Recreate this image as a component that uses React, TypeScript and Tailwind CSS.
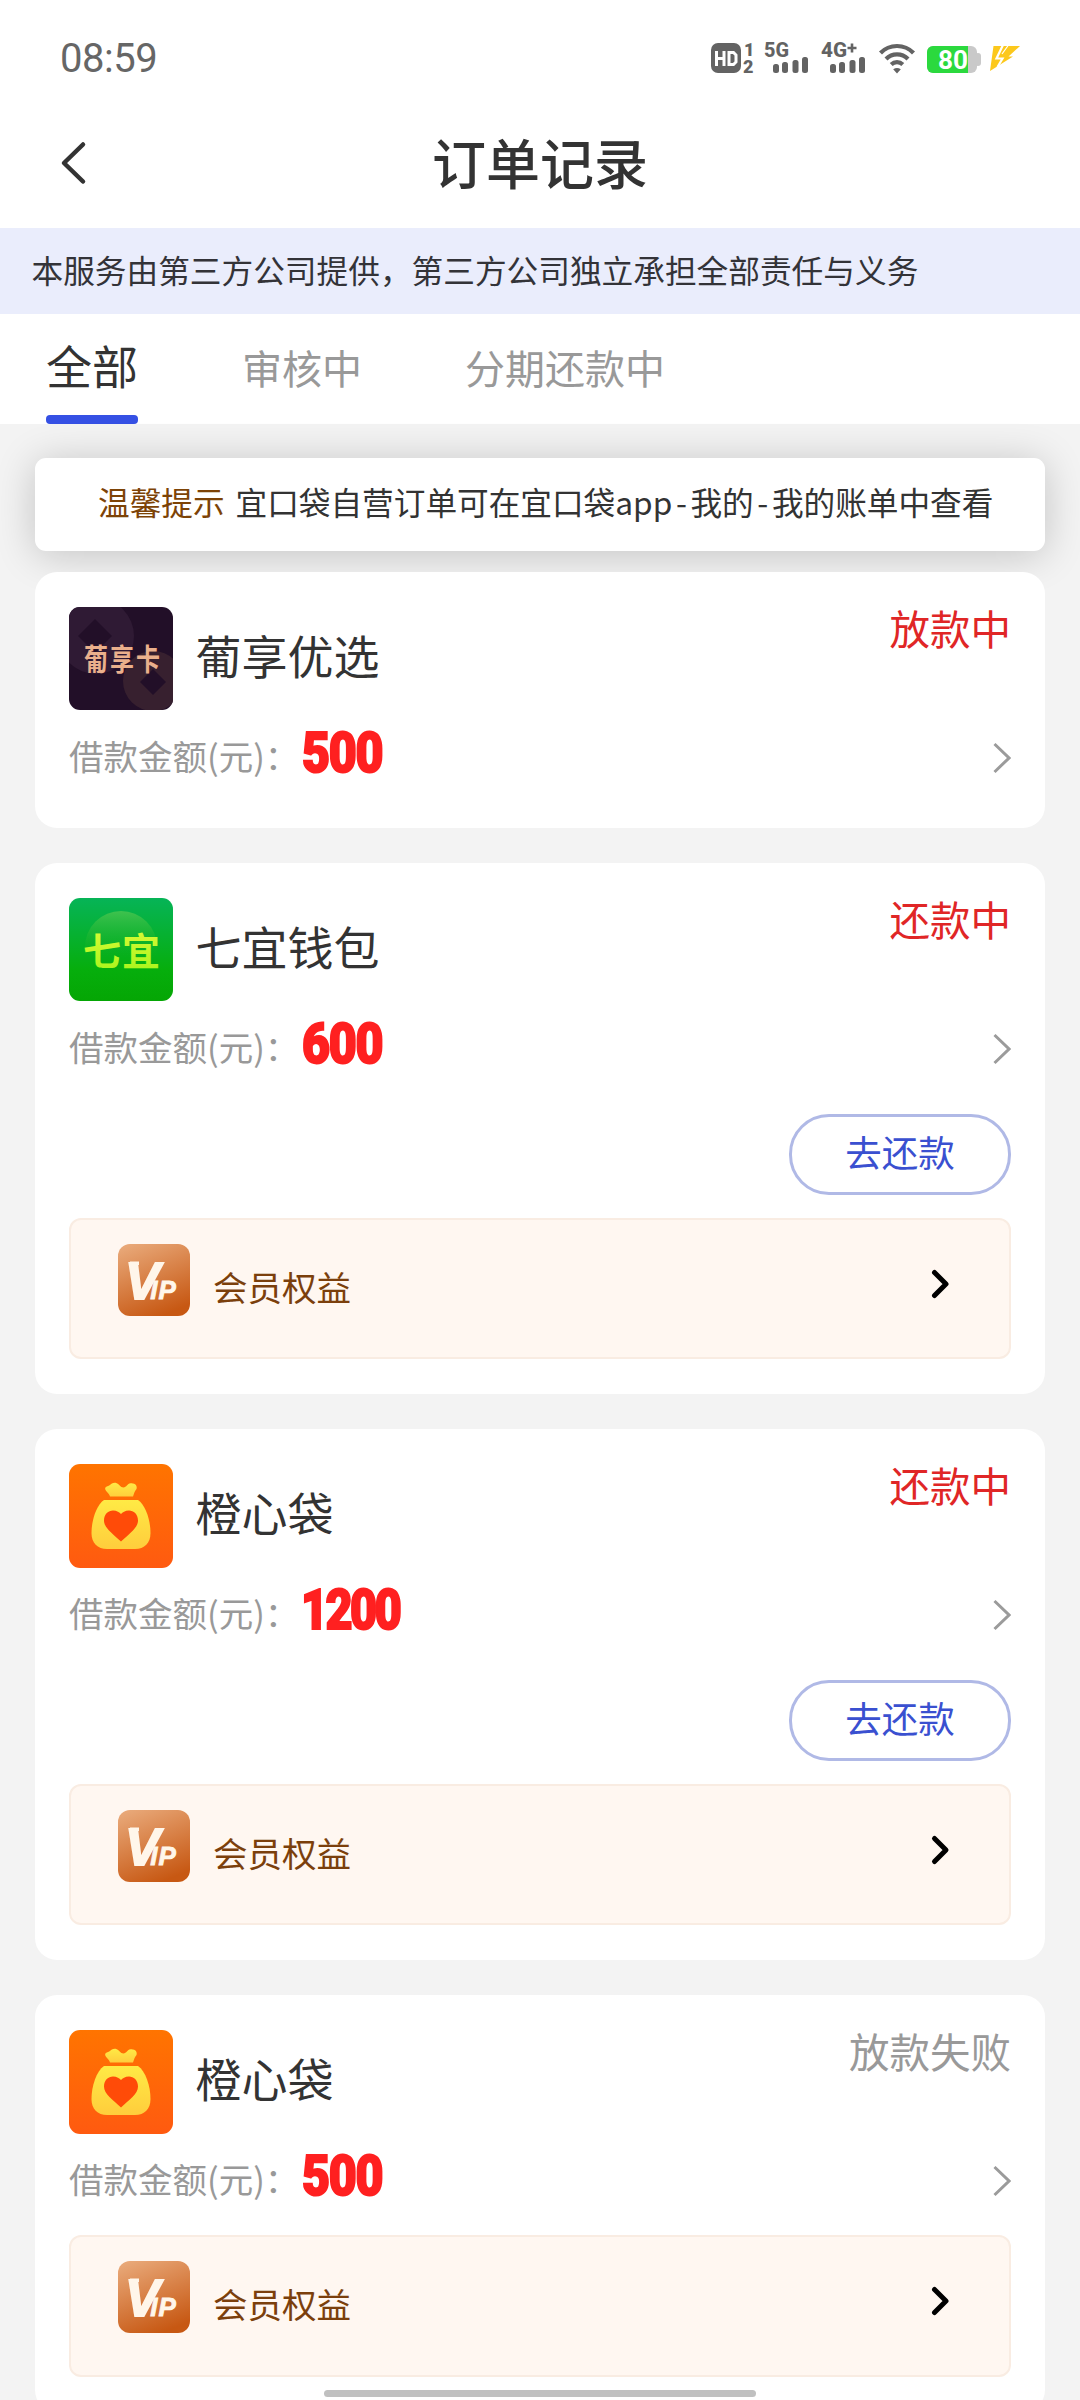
import React from "react";

type Order = {
  id: number;
  name: string;
  amount: string;
  status: string;
  failed?: boolean;
  repay?: boolean;
  vip?: boolean;
  logo: "puxiang" | "qiyi" | "chengxin";
};

const orders: Order[] = [
  { id: 1, name: "葡享优选", amount: "500", status: "放款中", logo: "puxiang" },
  { id: 2, name: "七宜钱包", amount: "600", status: "还款中", repay: true, vip: true, logo: "qiyi" },
  { id: 3, name: "橙心袋", amount: "1200", status: "还款中", repay: true, vip: true, logo: "chengxin" },
  { id: 4, name: "橙心袋", amount: "500", status: "放款失败", failed: true, vip: true, logo: "chengxin" },
];

const tabs = ["全部", "审核中", "分期还款中"];

function SignalBars() {
  return (
    <>
      <rect x="9" y="24" width="6" height="9" rx="2.5" />
      <rect x="18" y="22" width="6" height="11" rx="2.5" />
      <rect x="28.5" y="20" width="6" height="13" rx="2.5" />
      <rect x="38" y="17" width="6" height="16" rx="2.5" />
    </>
  );
}

function StatusBar() {
  return (
    <div className="flex h-[116px] items-center justify-between px-[60px]">
      <span className="pt-[2px] font-[Roboto] text-[40px] leading-[46px] tracking-[-0.5px] text-[#666666]">
        08:59
      </span>
      <div className="flex items-center text-[#636363]">
        {/* HD voice badge */}
        <svg className="h-[36px] w-[54px]" viewBox="0 0 54 36" fill="currentColor">
          <rect x="1" y="3" width="30" height="30" rx="7" />
          <g stroke="#fff" strokeWidth="3" fill="none">
            <path d="M6.5 11v15M14 11v15M6.5 18.500h7.500" />
            <path d="M19 12.500v12h4.500l2.500-2.500v-7l-2.500-2.500z" />
          </g>
          <text x="34" y="15.5" fontFamily="Roboto" fontWeight="900" fontSize="18">1</text>
          <text x="33" y="33" fontFamily="Roboto" fontWeight="900" fontSize="18">2</text>
        </svg>
        {/* SIM 1 */}
        <svg className="h-[36px] w-[57px] overflow-visible" viewBox="0 0 57 36" fill="currentColor">
          <text x="0" y="17" fontFamily="Roboto" fontWeight="800" fontSize="20" textLength="25" lengthAdjust="spacingAndGlyphs">5G</text>
          <SignalBars />
        </svg>
        {/* SIM 2 */}
        <svg className="h-[36px] w-[57px] overflow-visible" viewBox="0 0 57 36" fill="currentColor">
          <text x="0" y="17" fontFamily="Roboto" fontWeight="800" fontSize="20" textLength="26" lengthAdjust="spacingAndGlyphs">4G</text>
          <path d="M31 3.500v9M26.500 8h9" stroke="currentColor" strokeWidth="2.600" />
          <SignalBars />
        </svg>
        {/* Wifi */}
        <svg className="h-[36px] w-[49px]" viewBox="0 0 49 36" fill="none" stroke="currentColor" strokeWidth="4.2">
          <path d="M2.5 13a23 23 0 0 1 33 0" />
          <path d="M8 19a15.500 15.500 0 0 1 22 0" />
          <path d="M13.200 24.500a8.500 8.500 0 0 1 11.600 0" />
          <path d="M19 33.500l-3.800-4.200q3.800-2.800 7.600 0z" fill="currentColor" stroke="none" />
        </svg>
        {/* Battery */}
        <svg className="h-[36px] w-[61px]" viewBox="0 0 61 36">
          <rect x="0" y="6" width="50" height="27" rx="6" fill="#c9c9c9" />
          <rect x="48" y="13" width="6" height="13" rx="3" fill="#c9c9c9" />
          <path d="M6 6h35v27H6a6 6 0 0 1-6-6V12a6 6 0 0 1 6-6z" fill="#2bd93e" />
          <text x="11" y="28.500" fill="#fff" fontFamily="Roboto" fontWeight="700" fontSize="25" textLength="30" lengthAdjust="spacingAndGlyphs">80</text>
        </svg>
        {/* Charging bolt */}
        <svg className="h-[36px] w-[32px]" viewBox="0 0 32 36">
          <path d="M5.500 6H32L20.500 16.500h4.500L2 31z" fill="#fcc81c" />
          <path d="M15 5L8.500 18.500h6L9.500 27" fill="none" stroke="#fff" strokeWidth="2.200" />
          <path d="M20.500 5L14 14" fill="none" stroke="#fff" strokeWidth="1.200" />
        </svg>
      </div>
    </div>
  );
}

function PuxiangLogo() {
  return (
    <svg className="h-[103px] w-[104px]" viewBox="0 0 104 103">
      <defs>
        <clipPath id="puxiangClip">
          <rect width="104" height="103" rx="11" />
        </clipPath>
      </defs>
      <g clipPath="url(#puxiangClip)">
        <rect width="104" height="103" fill="#220f28" />
        <circle cx="27" cy="29" r="38" fill="#2f1a34" />
        <path d="M26 12l17 17-17 17L9 29z" fill="#220f28" />
        <circle cx="84" cy="74" r="30" fill="#37202f" />
        <path d="M84 62l13 13-13 13-13-13z" fill="#220f28" />
      </g>
      <text x="15" y="63" fill="#eab08c" fontFamily="'Noto Sans CJK SC', sans-serif" fontWeight="700" fontSize="24" letterSpacing="2" transform="translate(0 -14) scale(1 1.22)">
        葡享卡
      </text>
    </svg>
  );
}

function QiyiLogo() {
  return (
    <svg className="h-[103px] w-[104px]" viewBox="0 0 104 103">
      <defs>
        <linearGradient id="qiyiBg" x1="0" y1="0" x2="0" y2="1">
          <stop offset="0" stopColor="#06b457" />
          <stop offset="0.7" stopColor="#06ae0c" />
          <stop offset="1" stopColor="#05a604" />
        </linearGradient>
        <linearGradient id="qiyiGlow" x1="0" y1="0" x2="0" y2="1">
          <stop offset="0" stopColor="#3fc24e" />
          <stop offset="0.65" stopColor="#12b01c" stopOpacity="0" />
        </linearGradient>
        <linearGradient id="qiyiText" x1="0" y1="0" x2="0" y2="1">
          <stop offset="0" stopColor="#e2fb3a" />
          <stop offset="1" stopColor="#a4f41a" />
        </linearGradient>
      </defs>
      <rect width="104" height="103" rx="11" fill="url(#qiyiBg)" />
      <circle cx="52" cy="49" r="36" fill="url(#qiyiGlow)" />
      <text x="14" y="67" fill="url(#qiyiText)" fontFamily="'Noto Sans CJK SC', sans-serif" fontWeight="700" fontSize="38" textLength="77" lengthAdjust="spacing">
        七宜
      </text>
    </svg>
  );
}

function ChengxinLogo() {
  return (
    <svg className="h-[104px] w-[104px]" viewBox="0 0 104 104">
      <defs>
        <linearGradient id="chengxinBg" x1="0" y1="0" x2="0" y2="1">
          <stop offset="0" stopColor="#ff7400" />
          <stop offset="1" stopColor="#ff5a10" />
        </linearGradient>
        <linearGradient id="chengxinBag" x1="0" y1="0" x2="0" y2="1">
          <stop offset="0" stopColor="#ffea45" />
          <stop offset="1" stopColor="#ffcd3c" />
        </linearGradient>
      </defs>
      <rect width="104" height="104" rx="11" fill="url(#chengxinBg)" />
      <g fill="url(#chengxinBag)">
        <path d="M36.200 24c.6-1.800 2.500-1.500 4-2.500 2.200-1.500 4-3.200 7-2.500 3 .8 4 4.500 7.300 4.500 3 0 3.800-3.800 7-4.200 4.500-.6 7.200 2.500 6 5.700C65.500 27.500 65 29.500 64 32.500H41c-.8-3.500-5.500-5.500-4.800-8.500z" />
        <path d="M35 36h34c7.500 5 12.500 20 12.500 33 0 10-6 16-15.500 16H38c-9.500 0-15.500-6-15.500-16 0-13 5-28 12.500-33z" />
      </g>
      <path d="M52 77.500C44 70 35 64 35 56.500 35 50 39.500 46.500 44 46.500c4 0 6.500 2 8 3.500 1.500-1.500 4-3.500 8-3.500 4.500 0 9 3.500 9 10C69 64 60 70 52 77.500z" fill="#ff4b08" />
    </svg>
  );
}

function Logo({ type }: { type: Order["logo"] }) {
  if (type === "puxiang") return <PuxiangLogo />;
  if (type === "qiyi") return <QiyiLogo />;
  return <ChengxinLogo />;
}

function VipBar() {
  return (
    <div className="mt-[19px] flex h-[141.500px] items-start rounded-[12px] border-2 border-[#f9ece2] bg-[#fff7f1] pl-[47px] pr-[59px] pt-[24px]">
      <svg className="h-[72px] w-[72px]" viewBox="0 0 72 72">
        <defs>
          <linearGradient id="vipBg" x1="0.2" y1="0" x2="0.6" y2="1">
            <stop offset="0" stopColor="#e8a777" />
            <stop offset="1" stopColor="#c75813" />
          </linearGradient>
        </defs>
        <rect width="72" height="72" rx="12" fill="url(#vipBg)" />
        <text x="7" y="54.500" fill="#fff6ea" stroke="#fff6ea" strokeWidth="1.800" fontFamily="'Liberation Sans', sans-serif" fontWeight="700" fontStyle="italic" fontSize="52">
          V<tspan dx="-9.500" fontSize="26" strokeWidth="0.800" letterSpacing="1">IP</tspan>
        </text>
        <path d="M12 17.500h9v3.500h-9z" fill="#fff6ea" />
      </svg>
      <span className="ml-[23px] mt-[17px] text-[34.5px] leading-[50px] text-[#7b3f0c]">会员权益</span>
      <svg className="ml-auto mt-[24px] h-[32px] w-[20px]" viewBox="0 0 20 32" fill="none" stroke="#000" strokeWidth="5" strokeLinecap="round" strokeLinejoin="round">
        <path d="M4.500 4.500L16 16 4.500 27.500" />
      </svg>
    </div>
  );
}

function OrderCard({ order }: { order: Order }) {
  return (
    <div className="shrink-0 rounded-[22px] bg-white px-[34px] py-[35px]">
      {/* Logo, name and status */}
      <div className="flex h-[103px] items-start">
        <Logo type={order.logo} />
        <span className="ml-[22.500px] mt-[14px] text-[46px] leading-[66px] text-[#333333]">{order.name}</span>
        <span
          className={`-mt-[8px] ml-auto text-[40.500px] leading-[58px] ${
            order.failed ? "text-[#999999]" : "text-[#e02626]"
          }`}
        >
          {order.status}
        </span>
      </div>

      {/* Amount */}
      <div className="flex h-[83px] items-start">
        <span className="mt-[20px] text-[34.500px] leading-[50px] text-[#999999]">借款金额(元)：</span>
        <span
          className={`mt-[10px] origin-left font-[Roboto] text-[55px] font-black leading-[66px] text-[#ff2020] [-webkit-text-stroke:2px_#ff2020] ${
            order.amount.length > 3
              ? "ml-[2px] scale-x-[0.85] tracking-[-3px]"
              : "ml-[3px] scale-x-[0.88] tracking-[-1.500px]"
          }`}
        >
          {order.amount}
        </span>
        <svg className="ml-auto mt-[31px] h-[34px] w-[20px]" viewBox="0 0 20 34" fill="none" stroke="#9b9b9b" strokeWidth="3">
          <path d="M3.500 3L18 17 3.500 31" />
        </svg>
      </div>

      {order.repay && (
        <div className="flex justify-end pb-[4px] pt-[30px]">
          <button className="h-[80.500px] w-[222px] rounded-[40px] border-[3px] border-[#b0b9e6] pb-[5px] text-[36.500px] leading-[50px] text-[#3a50d0]">
            去还款
          </button>
        </div>
      )}
      {order.vip && <VipBar />}
    </div>
  );
}

export default function App() {
  return (
    <div className="relative flex h-[2400px] w-[1080px] flex-col overflow-hidden bg-[#f3f3f3] font-['Noto_Sans_CJK_SC',sans-serif]">
      <div className="shrink-0 bg-white">
        <StatusBar />
        {/* Title bar */}
        <header className="grid h-[112px] grid-cols-[1fr_auto_1fr] items-start px-[58px]">
          <svg className="mt-[24px] h-[46px] w-[30px]" viewBox="0 0 30 46" fill="none" stroke="#333" strokeWidth="4.500" strokeLinecap="round" strokeLinejoin="round">
            <path d="M25 4.500L6 23l19 18.500" />
          </svg>
          <h1 className="mt-[7px] text-[54px] font-medium leading-[78px] text-[#333333]">订单记录</h1>
        </header>
      </div>

      {/* Service notice */}
      <div className="flex h-[86px] shrink-0 items-center bg-[#eaedfc] pb-[3px] pl-[31.500px] text-[31.680px] text-[#333338]">
        本服务由第三方公司提供，第三方公司独立承担全部责任与义务
      </div>

      {/* Tabs */}
      <nav className="flex h-[110px] shrink-0 items-end bg-white pl-[46px]">
        {tabs.map((tab, i) => (
          <div
            key={tab}
            className={
              i === 0
                ? "mr-[104px] flex h-full w-[92px] flex-col justify-between pt-[17px] text-[46px] leading-[66px] text-[#333333]"
                : "mr-[103px] pb-[29px] text-[40px] leading-[56px] text-[#999999]"
            }
          >
            {tab}
            {i === 0 && <span className="h-[9px] w-full rounded-[4px] bg-[#3550e4]" />}
          </div>
        ))}
      </nav>

      <main className="flex shrink-0 flex-col px-[35px] pt-[34px]">
        {/* Reminder */}
        <div className="flex h-[93px] shrink-0 items-center rounded-[11px] bg-white pb-[5px] pl-[63px] text-[31.650px] text-[#333333] shadow-[0_4px_40px_rgba(0,0,0,0.2)]">
          <span className="mr-[11px] text-[#7d4306]">温馨提示</span>
          <span>
            宜口袋自营订单可在宜口袋app<span className="mx-[3.600px]">-</span>我的<span className="mx-[3.600px]">-</span>我的账单中查看
          </span>
        </div>

        <div className="mt-[21px] flex flex-col gap-[35px]">
          {orders.map((order) => (
            <OrderCard key={order.id} order={order} />
          ))}
        </div>
      </main>

      {/* Home indicator */}
      <div className="absolute bottom-[3px] left-[324px] h-[7px] w-[432px] rounded-full bg-[#c0c0c0]" />
    </div>
  );
}
